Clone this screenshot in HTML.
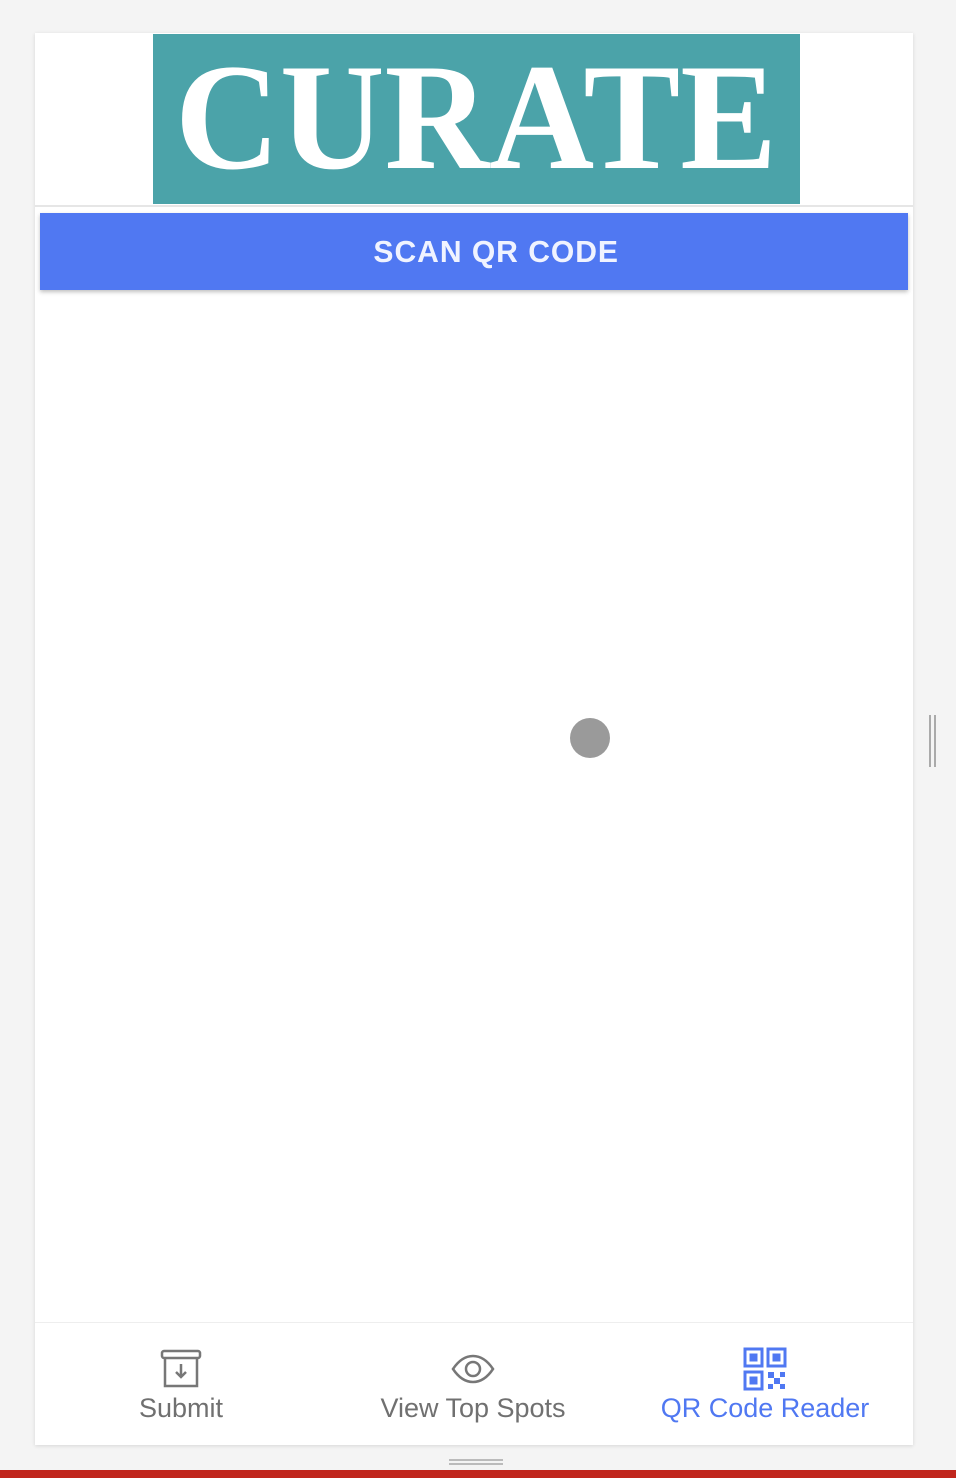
<!DOCTYPE html>
<html><head><style>
body{margin:0;width:956px;height:1478px;background:#f4f4f4;position:relative;overflow:hidden;font-family:"Liberation Sans",sans-serif}
.card{position:absolute;left:35px;top:33px;width:878px;height:1412px;background:#fff;box-shadow:0 1px 4px rgba(0,0,0,.12)}
.logo{position:absolute;left:153px;top:34px;width:647px;height:170px;background:#4ba3a9}
.logo svg{display:block}
.hdrline{position:absolute;left:35px;top:205px;width:878px;height:2px;background:#e6e6e6}
.btn{position:absolute;left:40px;top:213px;width:868px;height:77px;background:#5078f2;box-shadow:0 2px 4px rgba(0,0,0,.25)}
.btn span{position:absolute;left:0;width:868px;padding-left:42px;box-sizing:border-box;text-align:center;line-height:77px;color:#f0f3ff;font-size:31px;font-weight:bold;letter-spacing:1px;transform:scaleX(.97);transform-origin:495px 0}
.dot{position:absolute;left:570px;top:718px;width:40px;height:40px;border-radius:50%;background:#9a9a9a}
.nav{position:absolute;left:35px;top:1322px;width:878px;height:123px;border-top:1px solid #eee}
.it{position:absolute;top:0;text-align:center;font-size:27px;color:#707070;white-space:nowrap}
.it svg{display:block;margin:24px auto 0}
.handle{position:absolute;left:929px;top:715px;width:3px;height:52px;border-left:2px solid #aaa;border-right:2px solid #aaa}
.red{position:absolute;left:0;top:1470px;width:956px;height:8px;background:#c0261d}
.grip{position:absolute;left:449px;top:1459px;width:54px;height:6px;border-top:2px solid #bbb;border-bottom:2px solid #bbb;box-sizing:border-box}
</style></head><body>
<div class="card"></div>
<div class="logo"><svg width="647" height="170"><text x="22" y="134" textLength="602" lengthAdjust="spacingAndGlyphs" font-family="Liberation Serif" font-weight="bold" font-size="152" fill="#fff">CURATE</text></svg></div>
<div class="hdrline"></div>
<div class="btn"><span>SCAN QR CODE</span></div>
<div class="dot"></div>
<div class="nav">
 <div class="it" style="left:90px;width:112px"><svg width="44" height="44" viewBox="0 0 44 44" fill="none" stroke="#777" stroke-width="2.5"><rect x="3" y="4" width="38" height="7" rx="2"/><path d="M6 11v28h32V11"/><path d="M22 17v13M17 25l5 5 5-5"/></svg><div style="margin-top:2px">Submit</div></div>
 <div class="it" style="left:330px;width:216px"><svg width="44" height="44" viewBox="0 0 44 44" fill="none" stroke="#777" stroke-width="2.5"><path d="M2 22C8 13 15 9 22 9s14 4 20 13c-6 9-13 13-20 13S8 31 2 22z"/><circle cx="22" cy="22" r="7"/></svg><div style="margin-top:2px">View Top Spots</div></div>
 <div class="it" style="left:620px;width:220px;color:#5078f2"><svg width="44" height="44" viewBox="0 0 44 44" fill="none" stroke="#5078f2" stroke-width="3"><rect x="2" y="2" width="17" height="17"/><rect x="25" y="2" width="17" height="17"/><rect x="2" y="25" width="17" height="17"/><rect x="8" y="8" width="5" height="5" fill="#5078f2"/><rect x="31" y="8" width="5" height="5" fill="#5078f2"/><rect x="8" y="31" width="5" height="5" fill="#5078f2"/><path d="M25 25h6v6h-6zM37 25h5v5h-5zM31 31h6v6h-6zM25 37h5v5h-5zM37 37h5v5h-5z" fill="#5078f2" stroke="none"/></svg><div style="margin-top:2px">QR Code Reader</div></div>
</div>
<div class="handle"></div>
<div class="grip"></div>
<div class="red"></div>
</body></html>
